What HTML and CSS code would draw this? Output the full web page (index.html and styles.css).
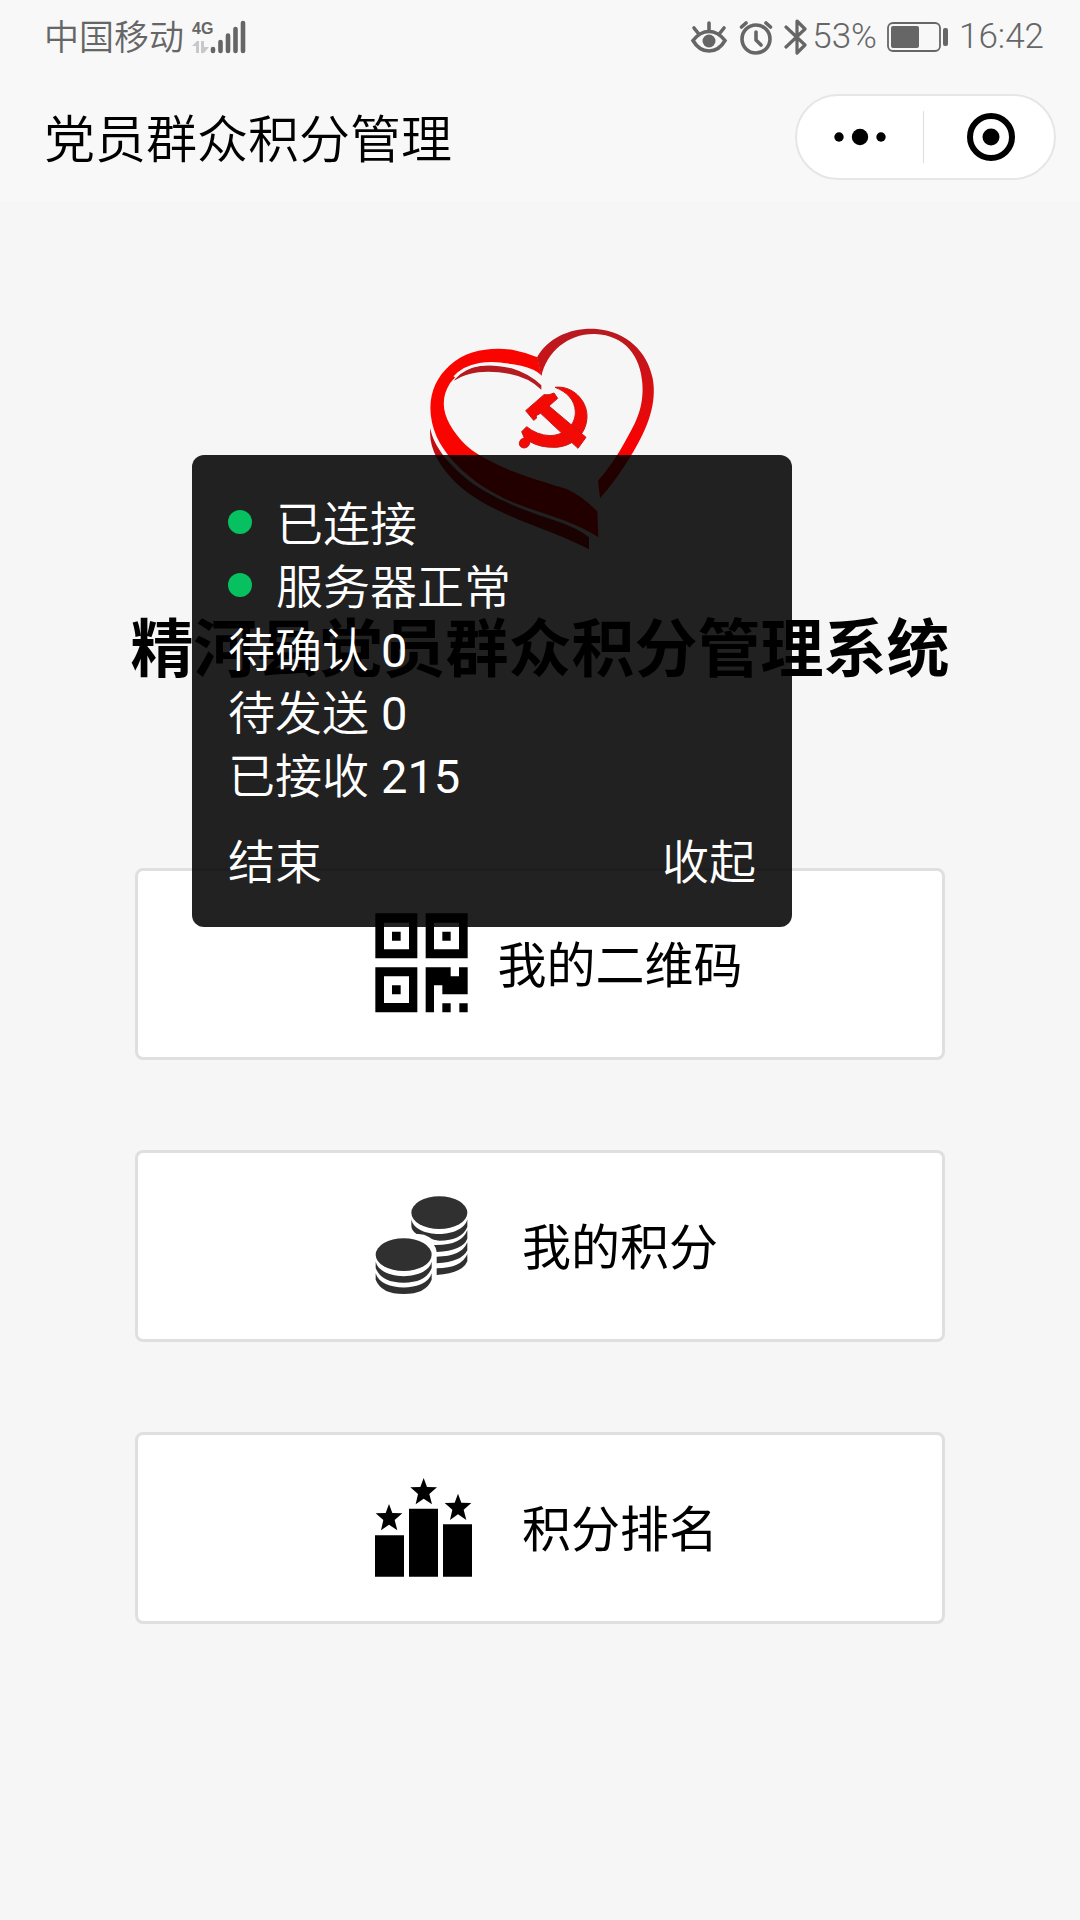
FILE: index.html
```html
<!DOCTYPE html>
<html lang="zh-CN">
<head>
    <meta charset="UTF-8">
    <meta name="viewport" content="width=device-width, initial-scale=1.0">
    <title>党员群众积分管理</title>
    <link rel="stylesheet" href="styles.css">
</head>
<body>
    <header class="header">
        <!-- 状态栏 -->
        <div class="status-bar">
            <div class="status-left">
                <span class="carrier">中国移动</span>
                <div class="network">
                    <span class="network-type">4G</span>
                    <svg width="17" height="13" viewBox="0 0 17 13" fill="#c8c8c8">
                        <path d="M0 5L5 0H7V12H4V5zM9 0H12V6H17L12 12H9z"/>
                    </svg>
                </div>
                <svg class="signal" width="36" height="34" viewBox="0 0 36 34" stroke="#666" stroke-width="4.6" stroke-linecap="round">
                    <path d="M3 29V31M10.5 22V31M18 15.500V31M25.500 9V31M33 3V31"/>
                </svg>
            </div>
            <div class="status-right">
                <svg width="38" height="36" viewBox="0 0 38 36" fill="none" stroke="#666" stroke-width="3.600" stroke-linecap="round">
                    <path d="M3 21.500Q10 12.500 19 12.500T35 21.500Q29 32 19 32T3 21.500zM19 4V12M4 9L8 14M34 9L30 14"/>
                    <circle cx="19" cy="22" r="6.500" fill="#666" stroke="none"/>
                </svg>
                <svg width="36" height="36" viewBox="0 0 36 36" fill="none" stroke="#666" stroke-width="3.600" stroke-linecap="round" stroke-linejoin="round">
                    <circle cx="18" cy="20" r="14"/>
                    <path d="M18 13V21L23 26M3.500 8L8 4M32.500 8L28 4"/>
                </svg>
                <svg width="24" height="36" viewBox="0 0 24 36" fill="none" stroke="#666" stroke-width="3.200" stroke-linecap="round" stroke-linejoin="round">
                    <path d="M2 8L21 26L13 34V2L21 10L2 28"/>
                </svg>
                <span class="percent">53%</span>
                <svg class="battery" width="62" height="30" viewBox="0 0 62 30">
                    <rect x="1" y="1" width="52" height="28" rx="5" fill="none" stroke="#666" stroke-width="1.800"/>
                    <rect x="4" y="4" width="28" height="22" rx="2" fill="#666"/>
                    <rect x="56" y="6" width="5" height="18" rx="2" fill="#666"/>
                </svg>
                <span>16:42</span>
            </div>
        </div>

        <!-- 导航栏 -->
        <div class="nav-bar">
            <span class="nav-title">党员群众积分管理</span>
            <div class="capsule">
                <button class="capsule-button" aria-label="更多">
                    <svg width="52" height="18" viewBox="0 0 52 18">
                        <circle cx="5" cy="9" r="4.700"/>
                        <circle cx="26" cy="9" r="8.200"/>
                        <circle cx="47" cy="9" r="4.700"/>
                    </svg>
                </button>
                <button class="capsule-button" aria-label="关闭">
                    <svg width="48" height="48" viewBox="0 0 48 48">
                        <circle cx="24" cy="24" r="21" fill="none" stroke="#000" stroke-width="6"/>
                        <circle cx="24" cy="24" r="8.500"/>
                    </svg>
                </button>
            </div>
        </div>
    </header>

    <main class="content">
        <svg class="logo" viewBox="60 60 720 720">
            <defs>
                <linearGradient id="right" x1="0" y1="0" x2="0" y2="1">
                    <stop offset="0" stop-color="#b51a20"/>
                    <stop offset="0.500" stop-color="#e60a0c"/>
                    <stop offset="0.700" stop-color="#fa0000"/>
                </linearGradient>
            </defs>
            <path fill="#fa0400" d="M424 226Q415 216 400 209Q340 184 265 192C208 198 172 220 150 250C112 310 134 370 198 436Q225 462 290 493C350 523 440 548 500 567Q550 590 592 635L595 712C520 660 400 635 330 603C230 558 148 490 110 410C72 320 95 245 148 197C200 148 280 140 340 150Q380 158 412 172z"/>
            <path fill="#b51a20" d="M162 242C195 190 270 190 335 205Q390 222 424 256V269Q385 232 330 222C260 208 205 215 162 242z"/>
            <path fill="none" stroke="#f6f6f6" stroke-width="9" d="M164 232C200 190 270 182 335 198Q385 212 424 242"/>
            <path fill="#c00b10" d="M91 385C100 440 150 500 220 552C300 607 400 640 480 667Q530 684 567 712V748Q520 724 460 700C360 660 240 620 165 545C115 495 85 440 91 385z"/>
            <path fill="url(#right)" d="M411 172C445 112 515 82 590 87C680 95 742 155 758 235C772 310 742 385 700 455Q655 532 600 595L594 542Q640 490 675 425C710 365 732 320 727 250C722 170 675 105 585 102C505 100 440 155 424 229z"/>
            <!-- 镰刀锤子 -->
            <g fill="#f30a05" stroke="#c81818" stroke-width="3">
                <path d="M465 262C515 255 562 300 561 350C560 405 515 440 465 442Q420 443 390 425Q388 443 372 444Q357 442 358 428Q360 416 373 414L365 395L380 380Q410 405 450 407C500 405 527 370 526 335C525 300 500 275 465 262z"/>
                <path d="M377 332L432 284Q447 287 462 279L473 295L447 318L558 412L534 445L422 340L408 347L410 354L401 361z"/>
            </g>
        </svg>

        <h1 class="title">精河县党员群众积分管理系统</h1>

        <div class="menu">
            <button class="menu-item">
                <svg class="icon" viewBox="75 98 300 300">
                    <path fill-rule="evenodd" d="M76 99H202V234H76zM102 127V207H177V127zM227 99H353V234H227zM252 127V207H327V127zM76 261H202V396H76zM102 288V368H177V288z"/>
                    <path d="M126 154H152V181H126zM277 154H302V181H277zM126 315H152V342H126zM227 261H302V288H327V261H353V342H277V315H252V396H227zM277 369H302V396H277zM328 369H353V396H328z"/>
                </svg>
                <span class="label">我的二维码</span>
            </button>
            <button class="menu-item">
                <svg class="icon" viewBox="75 73 300 300" fill="#303030">
                    <ellipse cx="268" cy="126" rx="84" ry="49"/>
                    <path d="M184 146C195 205 338 205 352 146V169Q335 210 268 210Q250 210 238 200Q220 188 200 190Q184 180 184 165z"/>
                    <path d="M252 223Q335 225 352 178V204Q338 240 260 244Q258 230 252 223zM260 258Q335 258 352 215V239Q335 274 260 278zM260 293Q335 292 352 250V272Q337 308 260 313z"/>
                    <ellipse cx="161" cy="252" rx="84" ry="49"/>
                    <path d="M77 273C92 331 230 331 245 273V292Q228 336 161 336Q94 336 77 292zM77 308C92 365 230 365 245 308V327Q228 370 161 370Q94 370 77 327z"/>
                </svg>
                <span class="label">我的积分</span>
            </button>
            <button class="menu-item">
                <svg class="icon" viewBox="75 80 300 300">
                    <path d="M75 255H162V379H75zM177 175H264V379H177zM279 222H366V379H279z"/>
                    <path id="star" d="M221 83L231 110L261 111L238 131L246 162L221 145L197 162L204 131L181 111L211 110z"/>
                    <use href="#star" x="-104" y="78"/>
                    <use href="#star" x="103" y="47"/>
                </svg>
                <span class="label">积分排名</span>
            </button>
        </div>
    </main>

    <!-- 调试面板 -->
    <aside class="debug-panel">
        <p class="debug-row"><i class="dot"></i>已连接</p>
        <p class="debug-row"><i class="dot"></i>服务器正常</p>
        <p class="debug-row">待确认<span class="count">0</span></p>
        <p class="debug-row">待发送<span class="count">0</span></p>
        <p class="debug-row">已接收<span class="count">215</span></p>
        <div class="debug-actions">
            <button class="debug-button">结束</button>
            <button class="debug-button">收起</button>
        </div>
    </aside>
</body>
</html>
```

FILE: styles.css
```css
body {
    margin: 0;
    font-family: Roboto, "Noto Sans CJK SC", sans-serif;
    background-color: #f6f6f6;
    color: #000;
}

button {
    font-family: inherit;
    color: inherit;
    padding: 0;
    border: none;
    background: none;
    cursor: pointer;
}

svg {
    flex-shrink: 0;
}

.header {
    background-color: #f8f8f8;
}

/* 状态栏 */
.status-bar {
    display: flex;
    justify-content: space-between;
    align-items: center;
    height: 74px;
    padding: 0 36px 0 44px;
    font-size: 35px;
    font-weight: 350;
    line-height: 48px;
    color: #666;
}

.status-left,
.status-right {
    display: flex;
    align-items: center;
}

.status-right {
    gap: 10px;
}

.carrier {
    margin-top: 4px;
}

.network {
    display: flex;
    flex-direction: column;
    gap: 4px;
    margin: 0 1px 0 8px;
}

.network-type {
    font-family: "Liberation Sans Narrow", "Liberation Sans", sans-serif;
    font-size: 16px;
    font-weight: bold;
    line-height: 17px;
    width: 17px;
}

.percent {
    margin-left: -6px;
}

/* 导航栏 */
.nav-bar {
    display: flex;
    justify-content: space-between;
    align-items: center;
    height: 127px;
    padding: 0 24px 0 44px;
}

.nav-title {
    font-size: 51px;
    font-weight: 350;
    line-height: 74px;
    margin-top: 6px;
}

.capsule {
    display: flex;
    align-items: center;
    width: 261px;
    height: 86px;
    margin-bottom: 2px;
    border: 2px solid #e6e6e6;
    border-radius: 43px;
    background-color: #fff;
    box-sizing: border-box;
}

.capsule-button {
    flex: 1;
    display: flex;
    justify-content: center;
    align-items: center;
    height: 52px;
}

.capsule-button + .capsule-button {
    padding-left: 5px;
    border-left: 1px solid #ddd;
}

/* 主要内容 */
.content {
    display: flex;
    flex-direction: column;
    align-items: center;
    padding: 119px 0 80px;
}

.logo {
    width: 240px;
    height: 240px;
}

.title {
    margin: 45px 0 173px;
    font-size: 63px;
    font-weight: bold;
    line-height: 90px;
    text-align: center;
}

.menu {
    display: flex;
    flex-direction: column;
    gap: 90px;
    width: 75%;
}

.menu-item {
    display: flex;
    align-items: center;
    height: 192px;
    padding-left: 237px;
    border: 3px solid #dfdfdf;
    border-radius: 8px;
    background-color: #fff;
    box-sizing: border-box;
}

.icon {
    width: 100px;
    height: 100px;
    margin-bottom: 3px;
}

.label {
    width: 290px;
    margin-bottom: 6px;
    font-size: 49px;
    text-align: center;
}

/* 调试面板 */
.debug-panel {
    position: absolute;
    top: 455px;
    left: 192px;
    width: 600px;
    padding: 38px 36px 33px;
    border-radius: 12px;
    background-color: rgba(0, 0, 0, 0.865);
    color: #fff;
    font-size: 47px;
    font-weight: 350;
    line-height: 63px;
    box-sizing: border-box;
}

.debug-row {
    display: flex;
    align-items: center;
    margin: 0;
}

.count {
    margin-left: 12px;
    font-weight: 400;
}

.dot {
    width: 24px;
    height: 24px;
    margin: 0 24px 6px 0;
    border-radius: 50%;
    background-color: #07c160;
}

.debug-actions {
    display: flex;
    justify-content: space-between;
    margin-top: 23px;
}

.debug-button {
    font-size: 47px;
    font-weight: 350;
    line-height: 63px;
}
```
